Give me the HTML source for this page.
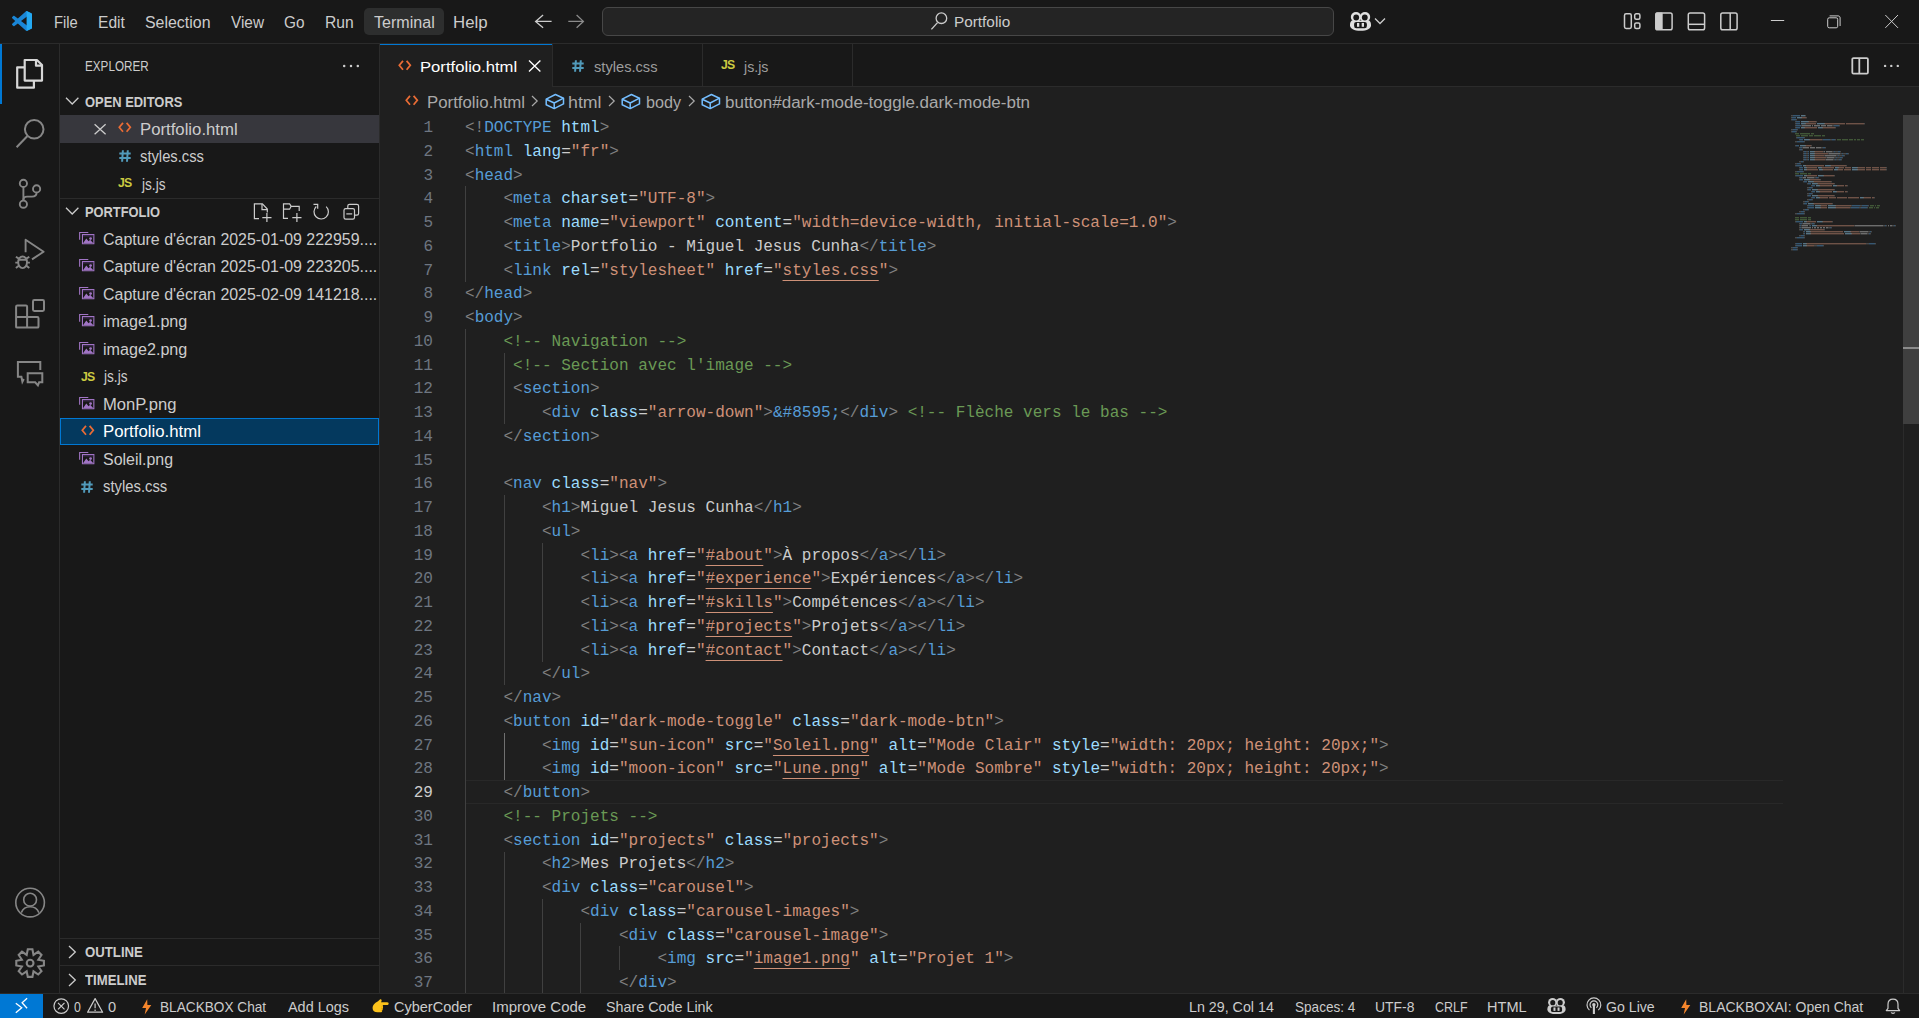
<!DOCTYPE html><html><head><meta charset="utf-8"><title>Portfolio - VS Code</title><style>html,body{margin:0;padding:0;background:#181818;overflow:hidden;width:1919px;height:1018px;position:relative}body>div,body>svg{position:absolute}.ui{font-family:"Liberation Sans",sans-serif;white-space:pre}.code{font-family:"Liberation Mono",monospace;font-size:16.04px;white-space:pre;color:#cccccc}.p{color:#808080}.t{color:#569cd6}.a{color:#9cdcfe}.s{color:#ce9178}.c{color:#6a9955}.x{color:#cccccc}.u{text-decoration:underline;text-underline-offset:4.8px;text-decoration-thickness:1px;text-decoration-skip-ink:none}</style></head><body><div style="left:0px;top:0px;width:1919px;height:43px;background:#181818;"></div><div style="left:0px;top:43px;width:1919px;height:1px;background:#2b2b2b;"></div><div style="left:364px;top:8px;width:80px;height:27px;background:#2d2e2e;border-radius:5px;"></div><div id="m_file" class="ui" style="left:54.03px;top:14.62px;font-size:15.8px;line-height:15.8px;color:#cccccc;font-weight:normal;transform:scaleX(0.9320);transform-origin:0 0;">File</div><div id="m_edit" class="ui" style="left:97.81px;top:14.62px;font-size:15.8px;line-height:15.8px;color:#cccccc;font-weight:normal;transform:scaleX(0.9852);transform-origin:0 0;">Edit</div><div id="m_sel" class="ui" style="left:145.00px;top:14.62px;font-size:15.8px;line-height:15.8px;color:#cccccc;font-weight:normal;transform:scaleX(1.0078);transform-origin:0 0;">Selection</div><div id="m_view" class="ui" style="left:230.79px;top:14.62px;font-size:15.8px;line-height:15.8px;color:#cccccc;font-weight:normal;transform:scaleX(0.9714);transform-origin:0 0;">View</div><div id="m_go" class="ui" style="left:284.21px;top:14.62px;font-size:15.8px;line-height:15.8px;color:#cccccc;font-weight:normal;transform:scaleX(0.9714);transform-origin:0 0;">Go</div><div id="m_run" class="ui" style="left:325.40px;top:14.62px;font-size:15.8px;line-height:15.8px;color:#cccccc;font-weight:normal;transform:scaleX(0.9893);transform-origin:0 0;">Run</div><div id="m_term" class="ui" style="left:374.00px;top:14.62px;font-size:15.8px;line-height:15.8px;color:#cccccc;font-weight:normal;transform:scaleX(1.0169);transform-origin:0 0;">Terminal</div><div id="m_help" class="ui" style="left:452.94px;top:14.62px;font-size:15.8px;line-height:15.8px;color:#cccccc;font-weight:normal;transform:scaleX(1.0645);transform-origin:0 0;">Help</div><div style="left:602px;top:7px;width:732px;height:29px;background:#242424;box-sizing:border-box;border:1px solid #474747;border-radius:6px;"></div><div id="cc_port" class="ui" style="left:953.79px;top:13.93px;font-size:15.2px;line-height:15.2px;color:#cccccc;font-weight:normal;transform:scaleX(1.0091);transform-origin:0 0;">Portfolio</div><div style="left:0px;top:44px;width:59px;height:949px;background:#181818;"></div><div style="left:59px;top:44px;width:1px;height:949px;background:#2b2b2b;"></div><div style="left:0px;top:44px;width:2px;height:60px;background:#0078d4;"></div><div style="left:60px;top:44px;width:319px;height:949px;background:#181818;"></div><div style="left:379px;top:44px;width:1px;height:949px;background:#2b2b2b;"></div><div id="sb_explorer" class="ui" style="left:84.90px;top:59.45px;font-size:14px;line-height:14px;color:#cccccc;font-weight:normal;transform:scaleX(0.8347);transform-origin:0 0;">EXPLORER</div><div id="sb_open" class="ui" style="left:85.00px;top:95.62px;font-size:13.8px;line-height:13.8px;color:#cccccc;font-weight:bold;transform:scaleX(0.9356);transform-origin:0 0;">OPEN EDITORS</div><div style="left:60px;top:115px;width:319px;height:28px;background:#37373d;"></div><div id="oe_port" class="ui" style="left:139.76px;top:121.79px;font-size:15.6px;line-height:15.6px;color:#cccccc;font-weight:normal;transform:scaleX(1.0733);transform-origin:0 0;">Portfolio.html</div><div id="oe_css" class="ui" style="left:139.83px;top:149.29px;font-size:15.6px;line-height:15.6px;color:#cccccc;font-weight:normal;transform:scaleX(0.9463);transform-origin:0 0;">styles.css</div><div id="oe_js" class="ui" style="left:141.62px;top:176.79px;font-size:15.6px;line-height:15.6px;color:#cccccc;font-weight:normal;transform:scaleX(0.8750);transform-origin:0 0;">js.js</div><div style="left:60px;top:198px;width:319px;height:1px;background:#2b2b2b;"></div><div id="sb_portfolio" class="ui" style="left:84.84px;top:206.02px;font-size:13.8px;line-height:13.8px;color:#cccccc;font-weight:bold;transform:scaleX(0.9313);transform-origin:0 0;">PORTFOLIO</div><div style="left:60px;top:418px;width:319px;height:27px;background:#04395e;box-sizing:border-box;border:1px solid #0078d4;"></div><div id="f0" class="ui" style="left:102.60px;top:231.79px;font-size:15.6px;line-height:15.6px;color:#cccccc;font-weight:normal;transform:scaleX(1.0225);transform-origin:0 0;">Capture d'écran 2025-01-09 222959....</div><div id="f1" class="ui" style="left:102.60px;top:259.29px;font-size:15.6px;line-height:15.6px;color:#cccccc;font-weight:normal;transform:scaleX(1.0225);transform-origin:0 0;">Capture d'écran 2025-01-09 223205....</div><div id="f2" class="ui" style="left:102.60px;top:286.79px;font-size:15.6px;line-height:15.6px;color:#cccccc;font-weight:normal;transform:scaleX(1.0225);transform-origin:0 0;">Capture d'écran 2025-02-09 141218....</div><div id="f3" class="ui" style="left:102.59px;top:314.29px;font-size:15.6px;line-height:15.6px;color:#cccccc;font-weight:normal;transform:scaleX(1.0346);transform-origin:0 0;">image1.png</div><div id="f4" class="ui" style="left:102.59px;top:341.79px;font-size:15.6px;line-height:15.6px;color:#cccccc;font-weight:normal;transform:scaleX(1.0346);transform-origin:0 0;">image2.png</div><div id="f5" class="ui" style="left:103.50px;top:369.29px;font-size:15.6px;line-height:15.6px;color:#cccccc;font-weight:normal;transform:scaleX(0.8750);transform-origin:0 0;">js.js</div><div id="f6" class="ui" style="left:102.59px;top:396.79px;font-size:15.6px;line-height:15.6px;color:#cccccc;font-weight:normal;transform:scaleX(1.0652);transform-origin:0 0;">MonP.png</div><div id="f7" class="ui" style="left:102.58px;top:424.29px;font-size:15.6px;line-height:15.6px;color:#ffffff;font-weight:normal;transform:scaleX(1.0756);transform-origin:0 0;">Portfolio.html</div><div id="f8" class="ui" style="left:102.60px;top:451.79px;font-size:15.6px;line-height:15.6px;color:#cccccc;font-weight:normal;transform:scaleX(1.0235);transform-origin:0 0;">Soleil.png</div><div id="f9" class="ui" style="left:102.61px;top:479.29px;font-size:15.6px;line-height:15.6px;color:#cccccc;font-weight:normal;transform:scaleX(0.9507);transform-origin:0 0;">styles.css</div><div style="left:60px;top:938px;width:319px;height:1px;background:#2b2b2b;"></div><div style="left:60px;top:965px;width:319px;height:1px;background:#2b2b2b;"></div><div id="sb_outline" class="ui" style="left:85.00px;top:946.12px;font-size:13.8px;line-height:13.8px;color:#cccccc;font-weight:bold;transform:scaleX(0.9557);transform-origin:0 0;">OUTLINE</div><div id="sb_timeline" class="ui" style="left:85.00px;top:974.22px;font-size:13.8px;line-height:13.8px;color:#cccccc;font-weight:bold;transform:scaleX(0.9538);transform-origin:0 0;">TIMELINE</div><div style="left:380px;top:44px;width:1539px;height:949px;background:#1f1f1f;"></div><div style="left:380px;top:44px;width:1539px;height:43px;background:#181818;"></div><div style="left:380px;top:86px;width:1539px;height:1px;background:#2b2b2b;"></div><div style="left:380px;top:44px;width:172px;height:43px;background:#1f1f1f;"></div><div style="left:380px;top:44px;width:172px;height:1px;background:#0078d4;"></div><div style="left:552px;top:44px;width:1px;height:42px;background:#2b2b2b;"></div><div style="left:702px;top:44px;width:1px;height:42px;background:#2b2b2b;"></div><div style="left:852px;top:44px;width:1px;height:42px;background:#2b2b2b;"></div><div id="tab_port" class="ui" style="left:420.16px;top:59.03px;font-size:15.2px;line-height:15.2px;color:#ffffff;font-weight:normal;transform:scaleX(1.0966);transform-origin:0 0;">Portfolio.html</div><div id="tab_css" class="ui" style="left:593.61px;top:59.03px;font-size:15.2px;line-height:15.2px;color:#9d9d9d;font-weight:normal;transform:scaleX(0.9652);transform-origin:0 0;">styles.css</div><div id="tab_js" class="ui" style="left:743.74px;top:59.03px;font-size:15.2px;line-height:15.2px;color:#9d9d9d;font-weight:normal;transform:scaleX(0.9333);transform-origin:0 0;">js.js</div><div id="bc_port" class="ui" style="left:427.17px;top:94.69px;font-size:15.6px;line-height:15.6px;color:#a9a9a9;font-weight:normal;transform:scaleX(1.0778);transform-origin:0 0;">Portfolio.html</div><div id="bc_html" class="ui" style="left:567.86px;top:94.69px;font-size:15.6px;line-height:15.6px;color:#a9a9a9;font-weight:normal;transform:scaleX(1.1393);transform-origin:0 0;">html</div><div id="bc_body" class="ui" style="left:645.80px;top:94.69px;font-size:15.6px;line-height:15.6px;color:#a9a9a9;font-weight:normal;transform:scaleX(1.0382);transform-origin:0 0;">body</div><div id="bc_btn" class="ui" style="left:725.00px;top:94.69px;font-size:15.6px;line-height:15.6px;color:#a9a9a9;font-weight:normal;transform:scaleX(1.0896);transform-origin:0 0;">button#dark-mode-toggle.dark-mode-btn</div><div style="left:465px;top:780px;width:1318px;height:1px;background:#282828;"></div><div style="left:465px;top:803px;width:1318px;height:1px;background:#282828;"></div><div style="left:465px;top:186px;width:1px;height:96px;background:#404040;"></div><div style="left:465px;top:329px;width:1px;height:665px;background:#404040;"></div><div style="left:504px;top:353px;width:1px;height:71px;background:#404040;"></div><div style="left:504px;top:495px;width:1px;height:190px;background:#404040;"></div><div style="left:542px;top:543px;width:1px;height:119px;background:#404040;"></div><div style="left:504px;top:733px;width:1px;height:47px;background:#707070;"></div><div style="left:504px;top:852px;width:1px;height:142px;background:#404040;"></div><div style="left:542px;top:899px;width:1px;height:95px;background:#404040;"></div><div style="left:580px;top:923px;width:1px;height:71px;background:#404040;"></div><div style="left:619px;top:946px;width:1px;height:24px;background:#404040;"></div><div class="code" style="left:380px;width:53px;text-align:right;top:117.00px;line-height:23.75px;color:#6e7681">1</div><div class="code" style="left:465px;top:117.00px;line-height:23.75px"><span class="p">&lt;!</span><span class="t">DOCTYPE</span><span class="x"> </span><span class="a">html</span><span class="p">&gt;</span></div><div class="code" style="left:380px;width:53px;text-align:right;top:140.75px;line-height:23.75px;color:#6e7681">2</div><div class="code" style="left:465px;top:140.75px;line-height:23.75px"><span class="x"></span><span class="p">&lt;</span><span class="t">html</span><span class="x"> </span><span class="a">lang</span><span class="x">=</span><span class="s">"fr"</span><span class="p">&gt;</span></div><div class="code" style="left:380px;width:53px;text-align:right;top:164.50px;line-height:23.75px;color:#6e7681">3</div><div class="code" style="left:465px;top:164.50px;line-height:23.75px"><span class="x"></span><span class="p">&lt;</span><span class="t">head</span><span class="p">&gt;</span></div><div class="code" style="left:380px;width:53px;text-align:right;top:188.25px;line-height:23.75px;color:#6e7681">4</div><div class="code" style="left:465px;top:188.25px;line-height:23.75px"><span class="x">    </span><span class="p">&lt;</span><span class="t">meta</span><span class="x"> </span><span class="a">charset</span><span class="x">=</span><span class="s">"UTF-8"</span><span class="p">&gt;</span></div><div class="code" style="left:380px;width:53px;text-align:right;top:212.00px;line-height:23.75px;color:#6e7681">5</div><div class="code" style="left:465px;top:212.00px;line-height:23.75px"><span class="x">    </span><span class="p">&lt;</span><span class="t">meta</span><span class="x"> </span><span class="a">name</span><span class="x">=</span><span class="s">"viewport"</span><span class="x"> </span><span class="a">content</span><span class="x">=</span><span class="s">"width=device-width, initial-scale=1.0"</span><span class="p">&gt;</span></div><div class="code" style="left:380px;width:53px;text-align:right;top:235.75px;line-height:23.75px;color:#6e7681">6</div><div class="code" style="left:465px;top:235.75px;line-height:23.75px"><span class="x">    </span><span class="p">&lt;</span><span class="t">title</span><span class="p">&gt;</span><span class="x">Portfolio - Miguel Jesus Cunha</span><span class="x"></span><span class="p">&lt;/</span><span class="t">title</span><span class="p">&gt;</span></div><div class="code" style="left:380px;width:53px;text-align:right;top:259.50px;line-height:23.75px;color:#6e7681">7</div><div class="code" style="left:465px;top:259.50px;line-height:23.75px"><span class="x">    </span><span class="p">&lt;</span><span class="t">link</span><span class="x"> </span><span class="a">rel</span><span class="x">=</span><span class="s">"stylesheet"</span><span class="x"> </span><span class="a">href</span><span class="x">=</span><span class="s">"</span><span class="s u">styles.css</span><span class="s">"</span><span class="p">&gt;</span></div><div class="code" style="left:380px;width:53px;text-align:right;top:283.25px;line-height:23.75px;color:#6e7681">8</div><div class="code" style="left:465px;top:283.25px;line-height:23.75px"><span class="x"></span><span class="p">&lt;/</span><span class="t">head</span><span class="p">&gt;</span></div><div class="code" style="left:380px;width:53px;text-align:right;top:307.00px;line-height:23.75px;color:#6e7681">9</div><div class="code" style="left:465px;top:307.00px;line-height:23.75px"><span class="x"></span><span class="p">&lt;</span><span class="t">body</span><span class="p">&gt;</span></div><div class="code" style="left:380px;width:53px;text-align:right;top:330.75px;line-height:23.75px;color:#6e7681">10</div><div class="code" style="left:465px;top:330.75px;line-height:23.75px"><span class="x">    </span><span class="c">&lt;!-- Navigation --&gt;</span></div><div class="code" style="left:380px;width:53px;text-align:right;top:354.50px;line-height:23.75px;color:#6e7681">11</div><div class="code" style="left:465px;top:354.50px;line-height:23.75px"><span class="x">     </span><span class="c">&lt;!-- Section avec l'image --&gt;</span></div><div class="code" style="left:380px;width:53px;text-align:right;top:378.25px;line-height:23.75px;color:#6e7681">12</div><div class="code" style="left:465px;top:378.25px;line-height:23.75px"><span class="x">     </span><span class="p">&lt;</span><span class="t">section</span><span class="p">&gt;</span></div><div class="code" style="left:380px;width:53px;text-align:right;top:402.00px;line-height:23.75px;color:#6e7681">13</div><div class="code" style="left:465px;top:402.00px;line-height:23.75px"><span class="x">        </span><span class="p">&lt;</span><span class="t">div</span><span class="x"> </span><span class="a">class</span><span class="x">=</span><span class="s">"arrow-down"</span><span class="p">&gt;</span><span class="t">&amp;#8595;</span><span class="x"></span><span class="p">&lt;/</span><span class="t">div</span><span class="p">&gt;</span><span class="x"> </span><span class="c">&lt;!-- Flèche vers le bas --&gt;</span></div><div class="code" style="left:380px;width:53px;text-align:right;top:425.75px;line-height:23.75px;color:#6e7681">14</div><div class="code" style="left:465px;top:425.75px;line-height:23.75px"><span class="x">    </span><span class="p">&lt;/</span><span class="t">section</span><span class="p">&gt;</span></div><div class="code" style="left:380px;width:53px;text-align:right;top:449.50px;line-height:23.75px;color:#6e7681">15</div><div class="code" style="left:465px;top:449.50px;line-height:23.75px"></div><div class="code" style="left:380px;width:53px;text-align:right;top:473.25px;line-height:23.75px;color:#6e7681">16</div><div class="code" style="left:465px;top:473.25px;line-height:23.75px"><span class="x">    </span><span class="p">&lt;</span><span class="t">nav</span><span class="x"> </span><span class="a">class</span><span class="x">=</span><span class="s">"nav"</span><span class="p">&gt;</span></div><div class="code" style="left:380px;width:53px;text-align:right;top:497.00px;line-height:23.75px;color:#6e7681">17</div><div class="code" style="left:465px;top:497.00px;line-height:23.75px"><span class="x">        </span><span class="p">&lt;</span><span class="t">h1</span><span class="p">&gt;</span><span class="x">Miguel Jesus Cunha</span><span class="x"></span><span class="p">&lt;/</span><span class="t">h1</span><span class="p">&gt;</span></div><div class="code" style="left:380px;width:53px;text-align:right;top:520.75px;line-height:23.75px;color:#6e7681">18</div><div class="code" style="left:465px;top:520.75px;line-height:23.75px"><span class="x">        </span><span class="p">&lt;</span><span class="t">ul</span><span class="p">&gt;</span></div><div class="code" style="left:380px;width:53px;text-align:right;top:544.50px;line-height:23.75px;color:#6e7681">19</div><div class="code" style="left:465px;top:544.50px;line-height:23.75px"><span class="x">            </span><span class="p">&lt;</span><span class="t">li</span><span class="p">&gt;</span><span class="x"></span><span class="p">&lt;</span><span class="t">a</span><span class="x"> </span><span class="a">href</span><span class="x">=</span><span class="s">"</span><span class="s u">#about</span><span class="s">"</span><span class="p">&gt;</span><span class="x">À propos</span><span class="x"></span><span class="p">&lt;/</span><span class="t">a</span><span class="p">&gt;</span><span class="x"></span><span class="p">&lt;/</span><span class="t">li</span><span class="p">&gt;</span></div><div class="code" style="left:380px;width:53px;text-align:right;top:568.25px;line-height:23.75px;color:#6e7681">20</div><div class="code" style="left:465px;top:568.25px;line-height:23.75px"><span class="x">            </span><span class="p">&lt;</span><span class="t">li</span><span class="p">&gt;</span><span class="x"></span><span class="p">&lt;</span><span class="t">a</span><span class="x"> </span><span class="a">href</span><span class="x">=</span><span class="s">"</span><span class="s u">#experience</span><span class="s">"</span><span class="p">&gt;</span><span class="x">Expériences</span><span class="x"></span><span class="p">&lt;/</span><span class="t">a</span><span class="p">&gt;</span><span class="x"></span><span class="p">&lt;/</span><span class="t">li</span><span class="p">&gt;</span></div><div class="code" style="left:380px;width:53px;text-align:right;top:592.00px;line-height:23.75px;color:#6e7681">21</div><div class="code" style="left:465px;top:592.00px;line-height:23.75px"><span class="x">            </span><span class="p">&lt;</span><span class="t">li</span><span class="p">&gt;</span><span class="x"></span><span class="p">&lt;</span><span class="t">a</span><span class="x"> </span><span class="a">href</span><span class="x">=</span><span class="s">"</span><span class="s u">#skills</span><span class="s">"</span><span class="p">&gt;</span><span class="x">Compétences</span><span class="x"></span><span class="p">&lt;/</span><span class="t">a</span><span class="p">&gt;</span><span class="x"></span><span class="p">&lt;/</span><span class="t">li</span><span class="p">&gt;</span></div><div class="code" style="left:380px;width:53px;text-align:right;top:615.75px;line-height:23.75px;color:#6e7681">22</div><div class="code" style="left:465px;top:615.75px;line-height:23.75px"><span class="x">            </span><span class="p">&lt;</span><span class="t">li</span><span class="p">&gt;</span><span class="x"></span><span class="p">&lt;</span><span class="t">a</span><span class="x"> </span><span class="a">href</span><span class="x">=</span><span class="s">"</span><span class="s u">#projects</span><span class="s">"</span><span class="p">&gt;</span><span class="x">Projets</span><span class="x"></span><span class="p">&lt;/</span><span class="t">a</span><span class="p">&gt;</span><span class="x"></span><span class="p">&lt;/</span><span class="t">li</span><span class="p">&gt;</span></div><div class="code" style="left:380px;width:53px;text-align:right;top:639.50px;line-height:23.75px;color:#6e7681">23</div><div class="code" style="left:465px;top:639.50px;line-height:23.75px"><span class="x">            </span><span class="p">&lt;</span><span class="t">li</span><span class="p">&gt;</span><span class="x"></span><span class="p">&lt;</span><span class="t">a</span><span class="x"> </span><span class="a">href</span><span class="x">=</span><span class="s">"</span><span class="s u">#contact</span><span class="s">"</span><span class="p">&gt;</span><span class="x">Contact</span><span class="x"></span><span class="p">&lt;/</span><span class="t">a</span><span class="p">&gt;</span><span class="x"></span><span class="p">&lt;/</span><span class="t">li</span><span class="p">&gt;</span></div><div class="code" style="left:380px;width:53px;text-align:right;top:663.25px;line-height:23.75px;color:#6e7681">24</div><div class="code" style="left:465px;top:663.25px;line-height:23.75px"><span class="x">        </span><span class="p">&lt;/</span><span class="t">ul</span><span class="p">&gt;</span></div><div class="code" style="left:380px;width:53px;text-align:right;top:687.00px;line-height:23.75px;color:#6e7681">25</div><div class="code" style="left:465px;top:687.00px;line-height:23.75px"><span class="x">    </span><span class="p">&lt;/</span><span class="t">nav</span><span class="p">&gt;</span></div><div class="code" style="left:380px;width:53px;text-align:right;top:710.75px;line-height:23.75px;color:#6e7681">26</div><div class="code" style="left:465px;top:710.75px;line-height:23.75px"><span class="x">    </span><span class="p">&lt;</span><span class="t">button</span><span class="x"> </span><span class="a">id</span><span class="x">=</span><span class="s">"dark-mode-toggle"</span><span class="x"> </span><span class="a">class</span><span class="x">=</span><span class="s">"dark-mode-btn"</span><span class="p">&gt;</span></div><div class="code" style="left:380px;width:53px;text-align:right;top:734.50px;line-height:23.75px;color:#6e7681">27</div><div class="code" style="left:465px;top:734.50px;line-height:23.75px"><span class="x">        </span><span class="p">&lt;</span><span class="t">img</span><span class="x"> </span><span class="a">id</span><span class="x">=</span><span class="s">"sun-icon"</span><span class="x"> </span><span class="a">src</span><span class="x">=</span><span class="s">"</span><span class="s u">Soleil.png</span><span class="s">"</span><span class="x"> </span><span class="a">alt</span><span class="x">=</span><span class="s">"Mode Clair"</span><span class="x"> </span><span class="a">style</span><span class="x">=</span><span class="s">"width: 20px; height: 20px;"</span><span class="p">&gt;</span></div><div class="code" style="left:380px;width:53px;text-align:right;top:758.25px;line-height:23.75px;color:#6e7681">28</div><div class="code" style="left:465px;top:758.25px;line-height:23.75px"><span class="x">        </span><span class="p">&lt;</span><span class="t">img</span><span class="x"> </span><span class="a">id</span><span class="x">=</span><span class="s">"moon-icon"</span><span class="x"> </span><span class="a">src</span><span class="x">=</span><span class="s">"</span><span class="s u">Lune.png</span><span class="s">"</span><span class="x"> </span><span class="a">alt</span><span class="x">=</span><span class="s">"Mode Sombre"</span><span class="x"> </span><span class="a">style</span><span class="x">=</span><span class="s">"width: 20px; height: 20px;"</span><span class="p">&gt;</span></div><div class="code" style="left:380px;width:53px;text-align:right;top:782.00px;line-height:23.75px;color:#cccccc">29</div><div class="code" style="left:465px;top:782.00px;line-height:23.75px"><span class="x">    </span><span class="p">&lt;/</span><span class="t">button</span><span class="p">&gt;</span></div><div class="code" style="left:380px;width:53px;text-align:right;top:805.75px;line-height:23.75px;color:#6e7681">30</div><div class="code" style="left:465px;top:805.75px;line-height:23.75px"><span class="x">    </span><span class="c">&lt;!-- Projets --&gt;</span></div><div class="code" style="left:380px;width:53px;text-align:right;top:829.50px;line-height:23.75px;color:#6e7681">31</div><div class="code" style="left:465px;top:829.50px;line-height:23.75px"><span class="x">    </span><span class="p">&lt;</span><span class="t">section</span><span class="x"> </span><span class="a">id</span><span class="x">=</span><span class="s">"projects"</span><span class="x"> </span><span class="a">class</span><span class="x">=</span><span class="s">"projects"</span><span class="p">&gt;</span></div><div class="code" style="left:380px;width:53px;text-align:right;top:853.25px;line-height:23.75px;color:#6e7681">32</div><div class="code" style="left:465px;top:853.25px;line-height:23.75px"><span class="x">        </span><span class="p">&lt;</span><span class="t">h2</span><span class="p">&gt;</span><span class="x">Mes Projets</span><span class="x"></span><span class="p">&lt;/</span><span class="t">h2</span><span class="p">&gt;</span></div><div class="code" style="left:380px;width:53px;text-align:right;top:877.00px;line-height:23.75px;color:#6e7681">33</div><div class="code" style="left:465px;top:877.00px;line-height:23.75px"><span class="x">        </span><span class="p">&lt;</span><span class="t">div</span><span class="x"> </span><span class="a">class</span><span class="x">=</span><span class="s">"carousel"</span><span class="p">&gt;</span></div><div class="code" style="left:380px;width:53px;text-align:right;top:900.75px;line-height:23.75px;color:#6e7681">34</div><div class="code" style="left:465px;top:900.75px;line-height:23.75px"><span class="x">            </span><span class="p">&lt;</span><span class="t">div</span><span class="x"> </span><span class="a">class</span><span class="x">=</span><span class="s">"carousel-images"</span><span class="p">&gt;</span></div><div class="code" style="left:380px;width:53px;text-align:right;top:924.50px;line-height:23.75px;color:#6e7681">35</div><div class="code" style="left:465px;top:924.50px;line-height:23.75px"><span class="x">                </span><span class="p">&lt;</span><span class="t">div</span><span class="x"> </span><span class="a">class</span><span class="x">=</span><span class="s">"carousel-image"</span><span class="p">&gt;</span></div><div class="code" style="left:380px;width:53px;text-align:right;top:948.25px;line-height:23.75px;color:#6e7681">36</div><div class="code" style="left:465px;top:948.25px;line-height:23.75px"><span class="x">                    </span><span class="p">&lt;</span><span class="t">img</span><span class="x"> </span><span class="a">src</span><span class="x">=</span><span class="s">"</span><span class="s u">image1.png</span><span class="s">"</span><span class="x"> </span><span class="a">alt</span><span class="x">=</span><span class="s">"Projet 1"</span><span class="p">&gt;</span></div><div class="code" style="left:380px;width:53px;text-align:right;top:972.00px;line-height:23.75px;color:#6e7681">37</div><div class="code" style="left:465px;top:972.00px;line-height:23.75px"><span class="x">                </span><span class="p">&lt;/</span><span class="t">div</span><span class="p">&gt;</span></div><svg style="left:1791px;top:115px;opacity:0.45" width="110" height="136" viewBox="0 0 110 136"><rect x="0" y="0" width="2" height="1.4" fill="#808080"/><rect x="2" y="0" width="7" height="1.4" fill="#569cd6"/><rect x="10" y="0" width="4" height="1.4" fill="#9cdcfe"/><rect x="14" y="0" width="1" height="1.4" fill="#808080"/><rect x="0" y="2" width="1" height="1.4" fill="#808080"/><rect x="1" y="2" width="4" height="1.4" fill="#569cd6"/><rect x="6" y="2" width="4" height="1.4" fill="#9cdcfe"/><rect x="10" y="2" width="1" height="1.4" fill="#cccccc"/><rect x="11" y="2" width="4" height="1.4" fill="#ce9178"/><rect x="15" y="2" width="1" height="1.4" fill="#808080"/><rect x="0" y="4" width="1" height="1.4" fill="#808080"/><rect x="1" y="4" width="4" height="1.4" fill="#569cd6"/><rect x="5" y="4" width="1" height="1.4" fill="#808080"/><rect x="4" y="6" width="1" height="1.4" fill="#808080"/><rect x="5" y="6" width="4" height="1.4" fill="#569cd6"/><rect x="10" y="6" width="7" height="1.4" fill="#9cdcfe"/><rect x="17" y="6" width="1" height="1.4" fill="#cccccc"/><rect x="18" y="6" width="7" height="1.4" fill="#ce9178"/><rect x="25" y="6" width="1" height="1.4" fill="#808080"/><rect x="4" y="8" width="1" height="1.4" fill="#808080"/><rect x="5" y="8" width="4" height="1.4" fill="#569cd6"/><rect x="10" y="8" width="4" height="1.4" fill="#9cdcfe"/><rect x="14" y="8" width="1" height="1.4" fill="#cccccc"/><rect x="15" y="8" width="10" height="1.4" fill="#ce9178"/><rect x="26" y="8" width="7" height="1.4" fill="#9cdcfe"/><rect x="33" y="8" width="1" height="1.4" fill="#cccccc"/><rect x="34" y="8" width="20" height="1.4" fill="#ce9178"/><rect x="55" y="8" width="18" height="1.4" fill="#ce9178"/><rect x="73" y="8" width="1" height="1.4" fill="#808080"/><rect x="4" y="10" width="1" height="1.4" fill="#808080"/><rect x="5" y="10" width="5" height="1.4" fill="#569cd6"/><rect x="10" y="10" width="1" height="1.4" fill="#808080"/><rect x="11" y="10" width="9" height="1.4" fill="#cccccc"/><rect x="21" y="10" width="1" height="1.4" fill="#cccccc"/><rect x="23" y="10" width="6" height="1.4" fill="#cccccc"/><rect x="30" y="10" width="5" height="1.4" fill="#cccccc"/><rect x="36" y="10" width="5" height="1.4" fill="#cccccc"/><rect x="41" y="10" width="2" height="1.4" fill="#808080"/><rect x="43" y="10" width="5" height="1.4" fill="#569cd6"/><rect x="48" y="10" width="1" height="1.4" fill="#808080"/><rect x="4" y="12" width="1" height="1.4" fill="#808080"/><rect x="5" y="12" width="4" height="1.4" fill="#569cd6"/><rect x="10" y="12" width="3" height="1.4" fill="#9cdcfe"/><rect x="13" y="12" width="1" height="1.4" fill="#cccccc"/><rect x="14" y="12" width="12" height="1.4" fill="#ce9178"/><rect x="27" y="12" width="4" height="1.4" fill="#9cdcfe"/><rect x="31" y="12" width="1" height="1.4" fill="#cccccc"/><rect x="32" y="12" width="12" height="1.4" fill="#ce9178"/><rect x="44" y="12" width="1" height="1.4" fill="#808080"/><rect x="0" y="14" width="2" height="1.4" fill="#808080"/><rect x="2" y="14" width="4" height="1.4" fill="#569cd6"/><rect x="6" y="14" width="1" height="1.4" fill="#808080"/><rect x="0" y="16" width="1" height="1.4" fill="#808080"/><rect x="1" y="16" width="4" height="1.4" fill="#569cd6"/><rect x="5" y="16" width="1" height="1.4" fill="#808080"/><rect x="4" y="18" width="4" height="1.4" fill="#6a9955"/><rect x="9" y="18" width="10" height="1.4" fill="#6a9955"/><rect x="20" y="18" width="3" height="1.4" fill="#6a9955"/><rect x="5" y="20" width="4" height="1.4" fill="#6a9955"/><rect x="10" y="20" width="7" height="1.4" fill="#6a9955"/><rect x="18" y="20" width="4" height="1.4" fill="#6a9955"/><rect x="23" y="20" width="7" height="1.4" fill="#6a9955"/><rect x="31" y="20" width="3" height="1.4" fill="#6a9955"/><rect x="5" y="22" width="1" height="1.4" fill="#808080"/><rect x="6" y="22" width="7" height="1.4" fill="#569cd6"/><rect x="13" y="22" width="1" height="1.4" fill="#808080"/><rect x="8" y="24" width="1" height="1.4" fill="#808080"/><rect x="9" y="24" width="3" height="1.4" fill="#569cd6"/><rect x="13" y="24" width="5" height="1.4" fill="#9cdcfe"/><rect x="18" y="24" width="1" height="1.4" fill="#cccccc"/><rect x="19" y="24" width="12" height="1.4" fill="#ce9178"/><rect x="31" y="24" width="1" height="1.4" fill="#808080"/><rect x="32" y="24" width="7" height="1.4" fill="#569cd6"/><rect x="39" y="24" width="2" height="1.4" fill="#808080"/><rect x="41" y="24" width="3" height="1.4" fill="#569cd6"/><rect x="44" y="24" width="1" height="1.4" fill="#808080"/><rect x="46" y="24" width="4" height="1.4" fill="#6a9955"/><rect x="51" y="24" width="6" height="1.4" fill="#6a9955"/><rect x="58" y="24" width="4" height="1.4" fill="#6a9955"/><rect x="63" y="24" width="2" height="1.4" fill="#6a9955"/><rect x="66" y="24" width="3" height="1.4" fill="#6a9955"/><rect x="70" y="24" width="3" height="1.4" fill="#6a9955"/><rect x="4" y="26" width="2" height="1.4" fill="#808080"/><rect x="6" y="26" width="7" height="1.4" fill="#569cd6"/><rect x="13" y="26" width="1" height="1.4" fill="#808080"/><rect x="4" y="30" width="1" height="1.4" fill="#808080"/><rect x="5" y="30" width="3" height="1.4" fill="#569cd6"/><rect x="9" y="30" width="5" height="1.4" fill="#9cdcfe"/><rect x="14" y="30" width="1" height="1.4" fill="#cccccc"/><rect x="15" y="30" width="5" height="1.4" fill="#ce9178"/><rect x="20" y="30" width="1" height="1.4" fill="#808080"/><rect x="8" y="32" width="1" height="1.4" fill="#808080"/><rect x="9" y="32" width="2" height="1.4" fill="#569cd6"/><rect x="11" y="32" width="1" height="1.4" fill="#808080"/><rect x="12" y="32" width="6" height="1.4" fill="#cccccc"/><rect x="19" y="32" width="5" height="1.4" fill="#cccccc"/><rect x="25" y="32" width="5" height="1.4" fill="#cccccc"/><rect x="30" y="32" width="2" height="1.4" fill="#808080"/><rect x="32" y="32" width="2" height="1.4" fill="#569cd6"/><rect x="34" y="32" width="1" height="1.4" fill="#808080"/><rect x="8" y="34" width="1" height="1.4" fill="#808080"/><rect x="9" y="34" width="2" height="1.4" fill="#569cd6"/><rect x="11" y="34" width="1" height="1.4" fill="#808080"/><rect x="12" y="36" width="1" height="1.4" fill="#808080"/><rect x="13" y="36" width="2" height="1.4" fill="#569cd6"/><rect x="15" y="36" width="2" height="1.4" fill="#808080"/><rect x="17" y="36" width="1" height="1.4" fill="#569cd6"/><rect x="19" y="36" width="4" height="1.4" fill="#9cdcfe"/><rect x="23" y="36" width="1" height="1.4" fill="#cccccc"/><rect x="24" y="36" width="8" height="1.4" fill="#ce9178"/><rect x="32" y="36" width="1" height="1.4" fill="#808080"/><rect x="33" y="36" width="1" height="1.4" fill="#cccccc"/><rect x="35" y="36" width="6" height="1.4" fill="#cccccc"/><rect x="41" y="36" width="2" height="1.4" fill="#808080"/><rect x="43" y="36" width="1" height="1.4" fill="#569cd6"/><rect x="44" y="36" width="3" height="1.4" fill="#808080"/><rect x="47" y="36" width="2" height="1.4" fill="#569cd6"/><rect x="49" y="36" width="1" height="1.4" fill="#808080"/><rect x="12" y="38" width="1" height="1.4" fill="#808080"/><rect x="13" y="38" width="2" height="1.4" fill="#569cd6"/><rect x="15" y="38" width="2" height="1.4" fill="#808080"/><rect x="17" y="38" width="1" height="1.4" fill="#569cd6"/><rect x="19" y="38" width="4" height="1.4" fill="#9cdcfe"/><rect x="23" y="38" width="1" height="1.4" fill="#cccccc"/><rect x="24" y="38" width="13" height="1.4" fill="#ce9178"/><rect x="37" y="38" width="1" height="1.4" fill="#808080"/><rect x="38" y="38" width="11" height="1.4" fill="#cccccc"/><rect x="49" y="38" width="2" height="1.4" fill="#808080"/><rect x="51" y="38" width="1" height="1.4" fill="#569cd6"/><rect x="52" y="38" width="3" height="1.4" fill="#808080"/><rect x="55" y="38" width="2" height="1.4" fill="#569cd6"/><rect x="57" y="38" width="1" height="1.4" fill="#808080"/><rect x="12" y="40" width="1" height="1.4" fill="#808080"/><rect x="13" y="40" width="2" height="1.4" fill="#569cd6"/><rect x="15" y="40" width="2" height="1.4" fill="#808080"/><rect x="17" y="40" width="1" height="1.4" fill="#569cd6"/><rect x="19" y="40" width="4" height="1.4" fill="#9cdcfe"/><rect x="23" y="40" width="1" height="1.4" fill="#cccccc"/><rect x="24" y="40" width="9" height="1.4" fill="#ce9178"/><rect x="33" y="40" width="1" height="1.4" fill="#808080"/><rect x="34" y="40" width="11" height="1.4" fill="#cccccc"/><rect x="45" y="40" width="2" height="1.4" fill="#808080"/><rect x="47" y="40" width="1" height="1.4" fill="#569cd6"/><rect x="48" y="40" width="3" height="1.4" fill="#808080"/><rect x="51" y="40" width="2" height="1.4" fill="#569cd6"/><rect x="53" y="40" width="1" height="1.4" fill="#808080"/><rect x="12" y="42" width="1" height="1.4" fill="#808080"/><rect x="13" y="42" width="2" height="1.4" fill="#569cd6"/><rect x="15" y="42" width="2" height="1.4" fill="#808080"/><rect x="17" y="42" width="1" height="1.4" fill="#569cd6"/><rect x="19" y="42" width="4" height="1.4" fill="#9cdcfe"/><rect x="23" y="42" width="1" height="1.4" fill="#cccccc"/><rect x="24" y="42" width="11" height="1.4" fill="#ce9178"/><rect x="35" y="42" width="1" height="1.4" fill="#808080"/><rect x="36" y="42" width="7" height="1.4" fill="#cccccc"/><rect x="43" y="42" width="2" height="1.4" fill="#808080"/><rect x="45" y="42" width="1" height="1.4" fill="#569cd6"/><rect x="46" y="42" width="3" height="1.4" fill="#808080"/><rect x="49" y="42" width="2" height="1.4" fill="#569cd6"/><rect x="51" y="42" width="1" height="1.4" fill="#808080"/><rect x="12" y="44" width="1" height="1.4" fill="#808080"/><rect x="13" y="44" width="2" height="1.4" fill="#569cd6"/><rect x="15" y="44" width="2" height="1.4" fill="#808080"/><rect x="17" y="44" width="1" height="1.4" fill="#569cd6"/><rect x="19" y="44" width="4" height="1.4" fill="#9cdcfe"/><rect x="23" y="44" width="1" height="1.4" fill="#cccccc"/><rect x="24" y="44" width="10" height="1.4" fill="#ce9178"/><rect x="34" y="44" width="1" height="1.4" fill="#808080"/><rect x="35" y="44" width="7" height="1.4" fill="#cccccc"/><rect x="42" y="44" width="2" height="1.4" fill="#808080"/><rect x="44" y="44" width="1" height="1.4" fill="#569cd6"/><rect x="45" y="44" width="3" height="1.4" fill="#808080"/><rect x="48" y="44" width="2" height="1.4" fill="#569cd6"/><rect x="50" y="44" width="1" height="1.4" fill="#808080"/><rect x="8" y="46" width="2" height="1.4" fill="#808080"/><rect x="10" y="46" width="2" height="1.4" fill="#569cd6"/><rect x="12" y="46" width="1" height="1.4" fill="#808080"/><rect x="4" y="48" width="2" height="1.4" fill="#808080"/><rect x="6" y="48" width="3" height="1.4" fill="#569cd6"/><rect x="9" y="48" width="1" height="1.4" fill="#808080"/><rect x="4" y="50" width="1" height="1.4" fill="#808080"/><rect x="5" y="50" width="6" height="1.4" fill="#569cd6"/><rect x="12" y="50" width="2" height="1.4" fill="#9cdcfe"/><rect x="14" y="50" width="1" height="1.4" fill="#cccccc"/><rect x="15" y="50" width="18" height="1.4" fill="#ce9178"/><rect x="34" y="50" width="5" height="1.4" fill="#9cdcfe"/><rect x="39" y="50" width="1" height="1.4" fill="#cccccc"/><rect x="40" y="50" width="15" height="1.4" fill="#ce9178"/><rect x="55" y="50" width="1" height="1.4" fill="#808080"/><rect x="8" y="52" width="1" height="1.4" fill="#808080"/><rect x="9" y="52" width="3" height="1.4" fill="#569cd6"/><rect x="13" y="52" width="2" height="1.4" fill="#9cdcfe"/><rect x="15" y="52" width="1" height="1.4" fill="#cccccc"/><rect x="16" y="52" width="10" height="1.4" fill="#ce9178"/><rect x="27" y="52" width="3" height="1.4" fill="#9cdcfe"/><rect x="30" y="52" width="1" height="1.4" fill="#cccccc"/><rect x="31" y="52" width="12" height="1.4" fill="#ce9178"/><rect x="44" y="52" width="3" height="1.4" fill="#9cdcfe"/><rect x="47" y="52" width="1" height="1.4" fill="#cccccc"/><rect x="48" y="52" width="5" height="1.4" fill="#ce9178"/><rect x="54" y="52" width="6" height="1.4" fill="#ce9178"/><rect x="61" y="52" width="5" height="1.4" fill="#9cdcfe"/><rect x="66" y="52" width="1" height="1.4" fill="#cccccc"/><rect x="67" y="52" width="7" height="1.4" fill="#ce9178"/><rect x="75" y="52" width="5" height="1.4" fill="#ce9178"/><rect x="81" y="52" width="7" height="1.4" fill="#ce9178"/><rect x="89" y="52" width="6" height="1.4" fill="#ce9178"/><rect x="95" y="52" width="1" height="1.4" fill="#808080"/><rect x="8" y="54" width="1" height="1.4" fill="#808080"/><rect x="9" y="54" width="3" height="1.4" fill="#569cd6"/><rect x="13" y="54" width="2" height="1.4" fill="#9cdcfe"/><rect x="15" y="54" width="1" height="1.4" fill="#cccccc"/><rect x="16" y="54" width="11" height="1.4" fill="#ce9178"/><rect x="28" y="54" width="3" height="1.4" fill="#9cdcfe"/><rect x="31" y="54" width="1" height="1.4" fill="#cccccc"/><rect x="32" y="54" width="10" height="1.4" fill="#ce9178"/><rect x="43" y="54" width="3" height="1.4" fill="#9cdcfe"/><rect x="46" y="54" width="1" height="1.4" fill="#cccccc"/><rect x="47" y="54" width="5" height="1.4" fill="#ce9178"/><rect x="53" y="54" width="7" height="1.4" fill="#ce9178"/><rect x="61" y="54" width="5" height="1.4" fill="#9cdcfe"/><rect x="66" y="54" width="1" height="1.4" fill="#cccccc"/><rect x="67" y="54" width="7" height="1.4" fill="#ce9178"/><rect x="75" y="54" width="5" height="1.4" fill="#ce9178"/><rect x="81" y="54" width="7" height="1.4" fill="#ce9178"/><rect x="89" y="54" width="6" height="1.4" fill="#ce9178"/><rect x="95" y="54" width="1" height="1.4" fill="#808080"/><rect x="4" y="56" width="2" height="1.4" fill="#808080"/><rect x="6" y="56" width="6" height="1.4" fill="#569cd6"/><rect x="12" y="56" width="1" height="1.4" fill="#808080"/><rect x="4" y="58" width="4" height="1.4" fill="#6a9955"/><rect x="9" y="58" width="7" height="1.4" fill="#6a9955"/><rect x="17" y="58" width="3" height="1.4" fill="#6a9955"/><rect x="4" y="60" width="1" height="1.4" fill="#808080"/><rect x="5" y="60" width="7" height="1.4" fill="#569cd6"/><rect x="13" y="60" width="2" height="1.4" fill="#9cdcfe"/><rect x="15" y="60" width="1" height="1.4" fill="#cccccc"/><rect x="16" y="60" width="10" height="1.4" fill="#ce9178"/><rect x="27" y="60" width="5" height="1.4" fill="#9cdcfe"/><rect x="32" y="60" width="1" height="1.4" fill="#cccccc"/><rect x="33" y="60" width="10" height="1.4" fill="#ce9178"/><rect x="43" y="60" width="1" height="1.4" fill="#808080"/><rect x="8" y="62" width="1" height="1.4" fill="#808080"/><rect x="9" y="62" width="2" height="1.4" fill="#569cd6"/><rect x="11" y="62" width="1" height="1.4" fill="#808080"/><rect x="12" y="62" width="3" height="1.4" fill="#cccccc"/><rect x="16" y="62" width="7" height="1.4" fill="#cccccc"/><rect x="23" y="62" width="2" height="1.4" fill="#808080"/><rect x="25" y="62" width="2" height="1.4" fill="#569cd6"/><rect x="27" y="62" width="1" height="1.4" fill="#808080"/><rect x="8" y="64" width="1" height="1.4" fill="#808080"/><rect x="9" y="64" width="3" height="1.4" fill="#569cd6"/><rect x="13" y="64" width="5" height="1.4" fill="#9cdcfe"/><rect x="18" y="64" width="1" height="1.4" fill="#cccccc"/><rect x="19" y="64" width="10" height="1.4" fill="#ce9178"/><rect x="29" y="64" width="1" height="1.4" fill="#808080"/><rect x="12" y="66" width="1" height="1.4" fill="#808080"/><rect x="13" y="66" width="3" height="1.4" fill="#569cd6"/><rect x="17" y="66" width="5" height="1.4" fill="#9cdcfe"/><rect x="22" y="66" width="1" height="1.4" fill="#cccccc"/><rect x="23" y="66" width="17" height="1.4" fill="#ce9178"/><rect x="40" y="66" width="1" height="1.4" fill="#808080"/><rect x="16" y="68" width="1" height="1.4" fill="#808080"/><rect x="17" y="68" width="3" height="1.4" fill="#569cd6"/><rect x="21" y="68" width="5" height="1.4" fill="#9cdcfe"/><rect x="26" y="68" width="1" height="1.4" fill="#cccccc"/><rect x="27" y="68" width="16" height="1.4" fill="#ce9178"/><rect x="43" y="68" width="1" height="1.4" fill="#808080"/><rect x="20" y="70" width="1" height="1.4" fill="#808080"/><rect x="21" y="70" width="3" height="1.4" fill="#569cd6"/><rect x="25" y="70" width="3" height="1.4" fill="#9cdcfe"/><rect x="28" y="70" width="1" height="1.4" fill="#cccccc"/><rect x="29" y="70" width="12" height="1.4" fill="#ce9178"/><rect x="42" y="70" width="3" height="1.4" fill="#9cdcfe"/><rect x="45" y="70" width="1" height="1.4" fill="#cccccc"/><rect x="46" y="70" width="7" height="1.4" fill="#ce9178"/><rect x="54" y="70" width="2" height="1.4" fill="#ce9178"/><rect x="56" y="70" width="1" height="1.4" fill="#808080"/><rect x="16" y="72" width="2" height="1.4" fill="#808080"/><rect x="18" y="72" width="3" height="1.4" fill="#569cd6"/><rect x="21" y="72" width="1" height="1.4" fill="#808080"/><rect x="16" y="74" width="1" height="1.4" fill="#808080"/><rect x="17" y="74" width="3" height="1.4" fill="#569cd6"/><rect x="21" y="74" width="5" height="1.4" fill="#9cdcfe"/><rect x="26" y="74" width="1" height="1.4" fill="#cccccc"/><rect x="27" y="74" width="16" height="1.4" fill="#ce9178"/><rect x="43" y="74" width="1" height="1.4" fill="#808080"/><rect x="20" y="76" width="1" height="1.4" fill="#808080"/><rect x="21" y="76" width="3" height="1.4" fill="#569cd6"/><rect x="25" y="76" width="3" height="1.4" fill="#9cdcfe"/><rect x="28" y="76" width="1" height="1.4" fill="#cccccc"/><rect x="29" y="76" width="12" height="1.4" fill="#ce9178"/><rect x="42" y="76" width="3" height="1.4" fill="#9cdcfe"/><rect x="45" y="76" width="1" height="1.4" fill="#cccccc"/><rect x="46" y="76" width="7" height="1.4" fill="#ce9178"/><rect x="54" y="76" width="2" height="1.4" fill="#ce9178"/><rect x="56" y="76" width="1" height="1.4" fill="#808080"/><rect x="16" y="78" width="2" height="1.4" fill="#808080"/><rect x="18" y="78" width="3" height="1.4" fill="#569cd6"/><rect x="21" y="78" width="1" height="1.4" fill="#808080"/><rect x="16" y="80" width="1" height="1.4" fill="#808080"/><rect x="17" y="80" width="3" height="1.4" fill="#569cd6"/><rect x="21" y="80" width="5" height="1.4" fill="#9cdcfe"/><rect x="26" y="80" width="1" height="1.4" fill="#cccccc"/><rect x="27" y="80" width="16" height="1.4" fill="#ce9178"/><rect x="43" y="80" width="1" height="1.4" fill="#808080"/><rect x="20" y="82" width="1" height="1.4" fill="#808080"/><rect x="21" y="82" width="3" height="1.4" fill="#569cd6"/><rect x="25" y="82" width="3" height="1.4" fill="#9cdcfe"/><rect x="28" y="82" width="1" height="1.4" fill="#cccccc"/><rect x="29" y="82" width="8" height="1.4" fill="#ce9178"/><rect x="38" y="82" width="7" height="1.4" fill="#ce9178"/><rect x="46" y="82" width="10" height="1.4" fill="#ce9178"/><rect x="57" y="82" width="11" height="1.4" fill="#ce9178"/><rect x="69" y="82" width="3" height="1.4" fill="#9cdcfe"/><rect x="72" y="82" width="1" height="1.4" fill="#cccccc"/><rect x="73" y="82" width="7" height="1.4" fill="#ce9178"/><rect x="81" y="82" width="2" height="1.4" fill="#ce9178"/><rect x="83" y="82" width="1" height="1.4" fill="#808080"/><rect x="16" y="84" width="2" height="1.4" fill="#808080"/><rect x="18" y="84" width="3" height="1.4" fill="#569cd6"/><rect x="21" y="84" width="1" height="1.4" fill="#808080"/><rect x="12" y="86" width="2" height="1.4" fill="#808080"/><rect x="14" y="86" width="3" height="1.4" fill="#569cd6"/><rect x="17" y="86" width="1" height="1.4" fill="#808080"/><rect x="12" y="88" width="1" height="1.4" fill="#808080"/><rect x="13" y="88" width="3" height="1.4" fill="#569cd6"/><rect x="17" y="88" width="5" height="1.4" fill="#9cdcfe"/><rect x="22" y="88" width="1" height="1.4" fill="#cccccc"/><rect x="23" y="88" width="18" height="1.4" fill="#ce9178"/><rect x="41" y="88" width="1" height="1.4" fill="#808080"/><rect x="16" y="90" width="1" height="1.4" fill="#808080"/><rect x="17" y="90" width="6" height="1.4" fill="#569cd6"/><rect x="24" y="90" width="5" height="1.4" fill="#9cdcfe"/><rect x="29" y="90" width="1" height="1.4" fill="#cccccc"/><rect x="30" y="90" width="6" height="1.4" fill="#ce9178"/><rect x="37" y="90" width="7" height="1.4" fill="#9cdcfe"/><rect x="44" y="90" width="1" height="1.4" fill="#cccccc"/><rect x="45" y="90" width="15" height="1.4" fill="#ce9178"/><rect x="60" y="90" width="1" height="1.4" fill="#808080"/><rect x="61" y="90" width="8" height="1.4" fill="#569cd6"/><rect x="69" y="90" width="2" height="1.4" fill="#808080"/><rect x="71" y="90" width="6" height="1.4" fill="#569cd6"/><rect x="77" y="90" width="1" height="1.4" fill="#808080"/><rect x="79" y="90" width="4" height="1.4" fill="#6a9955"/><rect x="84" y="90" width="1" height="1.4" fill="#6a9955"/><rect x="86" y="90" width="3" height="1.4" fill="#6a9955"/><rect x="16" y="92" width="1" height="1.4" fill="#808080"/><rect x="17" y="92" width="6" height="1.4" fill="#569cd6"/><rect x="24" y="92" width="5" height="1.4" fill="#9cdcfe"/><rect x="29" y="92" width="1" height="1.4" fill="#cccccc"/><rect x="30" y="92" width="6" height="1.4" fill="#ce9178"/><rect x="37" y="92" width="7" height="1.4" fill="#9cdcfe"/><rect x="44" y="92" width="1" height="1.4" fill="#cccccc"/><rect x="45" y="92" width="14" height="1.4" fill="#ce9178"/><rect x="59" y="92" width="1" height="1.4" fill="#808080"/><rect x="60" y="92" width="8" height="1.4" fill="#569cd6"/><rect x="68" y="92" width="2" height="1.4" fill="#808080"/><rect x="70" y="92" width="6" height="1.4" fill="#569cd6"/><rect x="76" y="92" width="1" height="1.4" fill="#808080"/><rect x="78" y="92" width="4" height="1.4" fill="#6a9955"/><rect x="83" y="92" width="1" height="1.4" fill="#6a9955"/><rect x="85" y="92" width="3" height="1.4" fill="#6a9955"/><rect x="12" y="94" width="2" height="1.4" fill="#808080"/><rect x="14" y="94" width="3" height="1.4" fill="#569cd6"/><rect x="17" y="94" width="1" height="1.4" fill="#808080"/><rect x="8" y="96" width="2" height="1.4" fill="#808080"/><rect x="10" y="96" width="3" height="1.4" fill="#569cd6"/><rect x="13" y="96" width="1" height="1.4" fill="#808080"/><rect x="4" y="98" width="2" height="1.4" fill="#808080"/><rect x="6" y="98" width="7" height="1.4" fill="#569cd6"/><rect x="13" y="98" width="1" height="1.4" fill="#808080"/><rect x="4" y="102" width="4" height="1.4" fill="#6a9955"/><rect x="9" y="102" width="7" height="1.4" fill="#6a9955"/><rect x="17" y="102" width="3" height="1.4" fill="#6a9955"/><rect x="4" y="104" width="4" height="1.4" fill="#6a9955"/><rect x="9" y="104" width="7" height="1.4" fill="#6a9955"/><rect x="17" y="104" width="3" height="1.4" fill="#6a9955"/><rect x="4" y="106" width="1" height="1.4" fill="#808080"/><rect x="5" y="106" width="7" height="1.4" fill="#569cd6"/><rect x="13" y="106" width="2" height="1.4" fill="#9cdcfe"/><rect x="15" y="106" width="1" height="1.4" fill="#cccccc"/><rect x="16" y="106" width="9" height="1.4" fill="#ce9178"/><rect x="26" y="106" width="5" height="1.4" fill="#9cdcfe"/><rect x="31" y="106" width="1" height="1.4" fill="#cccccc"/><rect x="32" y="106" width="9" height="1.4" fill="#ce9178"/><rect x="41" y="106" width="1" height="1.4" fill="#808080"/><rect x="8" y="108" width="1" height="1.4" fill="#808080"/><rect x="9" y="108" width="2" height="1.4" fill="#569cd6"/><rect x="11" y="108" width="1" height="1.4" fill="#808080"/><rect x="12" y="108" width="7" height="1.4" fill="#cccccc"/><rect x="19" y="108" width="2" height="1.4" fill="#808080"/><rect x="21" y="108" width="2" height="1.4" fill="#569cd6"/><rect x="23" y="108" width="1" height="1.4" fill="#808080"/><rect x="8" y="110" width="1" height="1.4" fill="#808080"/><rect x="9" y="110" width="1" height="1.4" fill="#569cd6"/><rect x="10" y="110" width="1" height="1.4" fill="#808080"/><rect x="11" y="110" width="6" height="1.4" fill="#cccccc"/><rect x="18" y="110" width="1" height="1.4" fill="#808080"/><rect x="19" y="110" width="1" height="1.4" fill="#569cd6"/><rect x="21" y="110" width="4" height="1.4" fill="#9cdcfe"/><rect x="25" y="110" width="1" height="1.4" fill="#cccccc"/><rect x="26" y="110" width="37" height="1.4" fill="#ce9178"/><rect x="63" y="110" width="1" height="1.4" fill="#808080"/><rect x="64" y="110" width="28" height="1.4" fill="#cccccc"/><rect x="92" y="110" width="2" height="1.4" fill="#808080"/><rect x="94" y="110" width="1" height="1.4" fill="#569cd6"/><rect x="95" y="110" width="1" height="1.4" fill="#808080"/><rect x="97" y="110" width="1" height="1.4" fill="#cccccc"/><rect x="99" y="110" width="2" height="1.4" fill="#cccccc"/><rect x="101" y="110" width="2" height="1.4" fill="#808080"/><rect x="103" y="110" width="1" height="1.4" fill="#569cd6"/><rect x="104" y="110" width="1" height="1.4" fill="#808080"/><rect x="8" y="112" width="1" height="1.4" fill="#808080"/><rect x="9" y="112" width="1" height="1.4" fill="#569cd6"/><rect x="10" y="112" width="1" height="1.4" fill="#808080"/><rect x="11" y="112" width="9" height="1.4" fill="#cccccc"/><rect x="21" y="112" width="1" height="1.4" fill="#cccccc"/><rect x="23" y="112" width="2" height="1.4" fill="#cccccc"/><rect x="26" y="112" width="2" height="1.4" fill="#cccccc"/><rect x="29" y="112" width="2" height="1.4" fill="#cccccc"/><rect x="32" y="112" width="2" height="1.4" fill="#cccccc"/><rect x="35" y="112" width="2" height="1.4" fill="#cccccc"/><rect x="37" y="112" width="2" height="1.4" fill="#808080"/><rect x="39" y="112" width="1" height="1.4" fill="#569cd6"/><rect x="40" y="112" width="1" height="1.4" fill="#808080"/><rect x="8" y="114" width="1" height="1.4" fill="#808080"/><rect x="9" y="114" width="3" height="1.4" fill="#569cd6"/><rect x="13" y="114" width="5" height="1.4" fill="#9cdcfe"/><rect x="18" y="114" width="1" height="1.4" fill="#cccccc"/><rect x="19" y="114" width="14" height="1.4" fill="#ce9178"/><rect x="33" y="114" width="1" height="1.4" fill="#808080"/><rect x="12" y="116" width="1" height="1.4" fill="#808080"/><rect x="13" y="116" width="1" height="1.4" fill="#569cd6"/><rect x="15" y="116" width="4" height="1.4" fill="#9cdcfe"/><rect x="19" y="116" width="1" height="1.4" fill="#cccccc"/><rect x="20" y="116" width="32" height="1.4" fill="#ce9178"/><rect x="53" y="116" width="6" height="1.4" fill="#9cdcfe"/><rect x="59" y="116" width="1" height="1.4" fill="#cccccc"/><rect x="60" y="116" width="8" height="1.4" fill="#ce9178"/><rect x="68" y="116" width="1" height="1.4" fill="#808080"/><rect x="69" y="116" width="8" height="1.4" fill="#cccccc"/><rect x="77" y="116" width="2" height="1.4" fill="#808080"/><rect x="79" y="116" width="1" height="1.4" fill="#569cd6"/><rect x="80" y="116" width="1" height="1.4" fill="#808080"/><rect x="12" y="118" width="1" height="1.4" fill="#808080"/><rect x="13" y="118" width="1" height="1.4" fill="#569cd6"/><rect x="15" y="118" width="4" height="1.4" fill="#9cdcfe"/><rect x="19" y="118" width="1" height="1.4" fill="#cccccc"/><rect x="20" y="118" width="33" height="1.4" fill="#ce9178"/><rect x="54" y="118" width="6" height="1.4" fill="#9cdcfe"/><rect x="60" y="118" width="1" height="1.4" fill="#cccccc"/><rect x="61" y="118" width="8" height="1.4" fill="#ce9178"/><rect x="69" y="118" width="1" height="1.4" fill="#808080"/><rect x="70" y="118" width="6" height="1.4" fill="#cccccc"/><rect x="76" y="118" width="2" height="1.4" fill="#808080"/><rect x="78" y="118" width="1" height="1.4" fill="#569cd6"/><rect x="79" y="118" width="1" height="1.4" fill="#808080"/><rect x="8" y="120" width="2" height="1.4" fill="#808080"/><rect x="10" y="120" width="3" height="1.4" fill="#569cd6"/><rect x="13" y="120" width="1" height="1.4" fill="#808080"/><rect x="4" y="122" width="2" height="1.4" fill="#808080"/><rect x="6" y="122" width="7" height="1.4" fill="#569cd6"/><rect x="13" y="122" width="1" height="1.4" fill="#808080"/><rect x="4" y="128" width="1" height="1.4" fill="#808080"/><rect x="5" y="128" width="6" height="1.4" fill="#569cd6"/><rect x="12" y="128" width="3" height="1.4" fill="#9cdcfe"/><rect x="15" y="128" width="1" height="1.4" fill="#cccccc"/><rect x="16" y="128" width="59" height="1.4" fill="#ce9178"/><rect x="75" y="128" width="3" height="1.4" fill="#808080"/><rect x="78" y="128" width="6" height="1.4" fill="#569cd6"/><rect x="84" y="128" width="1" height="1.4" fill="#808080"/><rect x="4" y="130" width="1" height="1.4" fill="#808080"/><rect x="5" y="130" width="6" height="1.4" fill="#569cd6"/><rect x="12" y="130" width="3" height="1.4" fill="#9cdcfe"/><rect x="15" y="130" width="1" height="1.4" fill="#cccccc"/><rect x="16" y="130" width="7" height="1.4" fill="#ce9178"/><rect x="23" y="130" width="3" height="1.4" fill="#808080"/><rect x="26" y="130" width="6" height="1.4" fill="#569cd6"/><rect x="32" y="130" width="1" height="1.4" fill="#808080"/><rect x="0" y="132" width="2" height="1.4" fill="#808080"/><rect x="2" y="132" width="4" height="1.4" fill="#569cd6"/><rect x="6" y="132" width="1" height="1.4" fill="#808080"/><rect x="0" y="134" width="2" height="1.4" fill="#808080"/><rect x="2" y="134" width="4" height="1.4" fill="#569cd6"/><rect x="6" y="134" width="1" height="1.4" fill="#808080"/></svg><div style="left:1903px;top:115px;width:16px;height:878px;background:#1f1f1f;box-sizing:border-box;border-left:1px solid #2b2b2b;"></div><div style="left:1903px;top:115px;width:16px;height:309px;background:#3f3f3f;"></div><div style="left:1903px;top:347px;width:16px;height:2px;background:#8a8a8a;"></div><div style="left:0px;top:993px;width:1919px;height:25px;background:#181818;"></div><div style="left:0px;top:993px;width:1919px;height:1px;background:#2b2b2b;"></div><div style="left:0px;top:994px;width:43px;height:24px;background:#0078d4;"></div><div id="st_e0" class="ui" style="left:74.36px;top:999.30px;font-size:15px;line-height:15px;color:#cccccc;font-weight:normal;transform:scaleX(0.8222);transform-origin:0 0;">0</div><div id="st_w0" class="ui" style="left:107.60px;top:999.30px;font-size:15px;line-height:15px;color:#cccccc;font-weight:normal;transform:scaleX(0.9750);transform-origin:0 0;">0</div><div id="st_bb" class="ui" style="left:160.09px;top:999.30px;font-size:15px;line-height:15px;color:#cccccc;font-weight:normal;transform:scaleX(0.9095);transform-origin:0 0;">BLACKBOX Chat</div><div id="st_logs" class="ui" style="left:287.98px;top:999.30px;font-size:15px;line-height:15px;color:#cccccc;font-weight:normal;transform:scaleX(0.9609);transform-origin:0 0;">Add Logs</div><div id="st_cyber" class="ui" style="left:393.82px;top:999.30px;font-size:15px;line-height:15px;color:#cccccc;font-weight:normal;transform:scaleX(0.9667);transform-origin:0 0;">CyberCoder</div><div id="st_impr" class="ui" style="left:492.00px;top:999.30px;font-size:15px;line-height:15px;color:#cccccc;font-weight:normal;">Improve Code</div><div id="st_share" class="ui" style="left:606.00px;top:999.30px;font-size:15px;line-height:15px;color:#cccccc;font-weight:normal;transform:scaleX(0.9554);transform-origin:0 0;">Share Code Link</div><div id="st_ln" class="ui" style="left:1189.05px;top:999.30px;font-size:15px;line-height:15px;color:#cccccc;font-weight:normal;transform:scaleX(0.9506);transform-origin:0 0;">Ln 29, Col 14</div><div id="st_sp" class="ui" style="left:1295.00px;top:999.30px;font-size:15px;line-height:15px;color:#cccccc;font-weight:normal;transform:scaleX(0.9045);transform-origin:0 0;">Spaces: 4</div><div id="st_utf" class="ui" style="left:1375.07px;top:999.30px;font-size:15px;line-height:15px;color:#cccccc;font-weight:normal;transform:scaleX(0.9286);transform-origin:0 0;">UTF-8</div><div id="st_crlf" class="ui" style="left:1434.90px;top:999.30px;font-size:15px;line-height:15px;color:#cccccc;font-weight:normal;transform:scaleX(0.8308);transform-origin:0 0;">CRLF</div><div id="st_html" class="ui" style="left:1486.83px;top:999.30px;font-size:15px;line-height:15px;color:#cccccc;font-weight:normal;transform:scaleX(0.9700);transform-origin:0 0;">HTML</div><div id="st_live" class="ui" style="left:1606.00px;top:999.30px;font-size:15px;line-height:15px;color:#cccccc;font-weight:normal;transform:scaleX(0.9423);transform-origin:0 0;">Go Live</div><div id="st_bbai" class="ui" style="left:1699.07px;top:999.30px;font-size:15px;line-height:15px;color:#cccccc;font-weight:normal;transform:scaleX(0.9337);transform-origin:0 0;">BLACKBOXAI: Open Chat</div><svg style="left:12px;top:11px;" width="20" height="20" viewBox="0 0 20 20"><g transform="scale(0.2)"><path fill="#1a86d6" d="M96.46 10.8 L75.86 0.87 C73.47 -0.28 70.62 0.2 68.75 2.08 L29.29 38.07 L12.11 25.03 C10.51 23.81 8.27 23.91 6.78 25.26 L1.27 30.28 C-0.54 31.92 -0.54 34.77 1.27 36.42 L16.17 50 L1.27 63.58 C-0.54 65.23 -0.54 68.07 1.27 69.72 L6.78 74.73 C8.27 76.09 10.51 76.19 12.11 74.97 L29.29 61.93 L68.75 97.92 C70.62 99.8 73.47 100.28 75.86 99.13 L96.46 89.2 C98.62 88.16 100 85.97 100 83.57 V16.43 C100 14.03 98.62 11.84 96.46 10.8 Z M75.03 72.7 L45.1 50 L75.03 27.3 V72.7 Z"/><path fill="#24a9f2" d="M73 0.6 L96.46 10.8 C98.62 11.84 100 14.03 100 16.43 V83.57 C100 85.97 98.62 88.16 96.46 89.2 L73 99.4 Z"/></g></svg><svg style="left:530px;top:8px;" width="60" height="28" viewBox="0 0 60 28"><path d="M13.1 7 L5.6 13.4 L13.1 19.8 M5.8 13.4 H21.6" fill="none" stroke="#cccccc" stroke-width="1.3"/><path d="M46.6 7 L53.4 13.4 L46.6 19.8 M38.3 13.4 H53.2" fill="none" stroke="#8b8b8b" stroke-width="1.3"/></svg><svg style="left:928px;top:9px;" width="24" height="24" viewBox="0 0 24 24"><circle cx="13.4" cy="9.2" r="5.3" fill="none" stroke="#cccccc" stroke-width="1.3"/><path d="M3.4 20.4 L9.5 13.6" stroke="#cccccc" stroke-width="1.4"/></svg><svg style="left:1350px;top:11.5px;" width="21" height="19" viewBox="0 0 21 19"><g fill="#e0e0e0"><ellipse cx="6" cy="5" rx="5.2" ry="5"/><ellipse cx="15" cy="5" rx="5.2" ry="5"/><path d="M1.8 8.6 C0.4 9.6 0 11.4 0 13.2 C0 16.6 4 18.8 10.5 18.8 C17 18.8 21 16.6 21 13.2 C21 11.4 20.6 9.6 19.2 8.6 Z"/></g><g fill="#181818"><ellipse cx="6.2" cy="5.4" rx="2.9" ry="3"/><ellipse cx="14.8" cy="5.4" rx="2.9" ry="3"/><rect x="4.1" y="9.9" width="12.8" height="6.3" rx="2.2"/></g><g fill="#e0e0e0"><rect x="7" y="10.9" width="2.3" height="3.9"/><rect x="11.7" y="10.9" width="2.3" height="3.9"/></g></svg><svg style="left:1374px;top:17px;" width="12" height="8" viewBox="0 0 12 8"><path d="M1 1.5 L6 6.5 L11 1.5" fill="none" stroke="#cccccc" stroke-width="1.3"/></svg><svg style="left:1620px;top:10px;" width="24" height="24" viewBox="0 0 24 24"><rect x="4.5" y="3.8" width="6.8" height="14.6" rx="1.6" fill="none" stroke="#cccccc" stroke-width="1.5"/><rect x="14.7" y="3.8" width="5.2" height="5.5" rx="1.5" fill="none" stroke="#cccccc" stroke-width="1.5"/><rect x="14.7" y="12.9" width="5.2" height="5.5" rx="1.5" fill="none" stroke="#cccccc" stroke-width="1.5"/></svg><svg style="left:1652px;top:10px;" width="24" height="24" viewBox="0 0 24 24"><rect x="3.8" y="2.9" width="16.3" height="16.8" rx="1.8" fill="none" stroke="#cccccc" stroke-width="1.5"/><rect x="3.5" y="2.6" width="7.2" height="17.4" rx="1.2" fill="#cccccc"/></svg><svg style="left:1684px;top:10px;" width="24" height="24" viewBox="0 0 24 24"><rect x="4.3" y="2.9" width="16.3" height="16.8" rx="1.8" fill="none" stroke="#cccccc" stroke-width="1.5"/><path d="M4.3 14.3 H20.6" stroke="#cccccc" stroke-width="1.5"/></svg><svg style="left:1717px;top:10px;" width="24" height="24" viewBox="0 0 24 24"><rect x="3.8" y="2.9" width="16.3" height="16.8" rx="1.8" fill="none" stroke="#cccccc" stroke-width="1.5"/><path d="M13.2 2.9 V19.7" stroke="#cccccc" stroke-width="1.5"/></svg><svg style="left:1765px;top:10px;" width="140" height="24" viewBox="0 0 140 24"><path d="M5.9 10.5 H19.2" stroke="#cccccc" stroke-width="1"/><rect x="62.7" y="7.8" width="10" height="10" rx="1.5" fill="none" stroke="#cccccc" stroke-width="1"/><path d="M64.6 5.9 H73 C74.4 5.9 75.1 6.6 75.1 8 V16" fill="none" stroke="#cccccc" stroke-width="1"/><path d="M120.3 5 L133 17.9 M133 5 L120.3 17.9" stroke="#cccccc" stroke-width="1"/></svg><svg style="left:12px;top:54px;" width="36" height="40" viewBox="0 0 36 40"><g fill="none" stroke="#d7d7d7" stroke-width="2.2" stroke-linejoin="round"><path d="M12.7 13.3 H5.2 V33.7 H21.9 V26.6"/><path d="M12.7 6 H24.9 L30 11 V26.6 H12.7 Z"/><path d="M24 6 V11.7 H30"/></g></svg><svg style="left:12px;top:112px;" width="36" height="40" viewBox="0 0 36 40"><g fill="none" stroke="#868686" stroke-width="2"><circle cx="22.2" cy="17.3" r="9.3"/><path d="M4.6 35.3 L15.2 24.3"/></g></svg><svg style="left:12px;top:172px;" width="36" height="40" viewBox="0 0 36 40"><g fill="none" stroke="#868686" stroke-width="1.9"><circle cx="11.4" cy="11.4" r="3.6"/><circle cx="24.6" cy="16.9" r="3.6"/><circle cx="11.4" cy="32.2" r="3.6"/><path d="M11.4 15 V28.6"/><path d="M24.6 20.5 C24.6 23.5 23 24.6 20 24.6 H15 C13 24.6 11.4 25.5 11.4 28"/></g></svg><svg style="left:12px;top:232px;" width="36" height="40" viewBox="0 0 36 40"><g fill="none" stroke="#868686" stroke-width="1.9" stroke-linejoin="round"><path d="M13.6 20.3 V7.8 L31.6 19.7 L20 27.4"/><ellipse cx="10.6" cy="30.3" rx="4.4" ry="5.8"/><path d="M6.4 27.8 H14.8 M3.3 30.6 H6.2 M15 30.6 H17.9 M3.9 24.8 L6.8 26.6 M17.3 24.8 L14.4 26.6 M3.9 36.1 L6.8 33.8 M17.3 36.1 L14.4 33.8"/></g></svg><svg style="left:12px;top:292px;" width="36" height="40" viewBox="0 0 36 40"><g fill="none" stroke="#868686" stroke-width="2" stroke-linejoin="round"><path d="M4.1 35.6 V14.8 Q4.1 13.6 5.3 13.6 H14 Q15.1 13.6 15.1 14.8 V35.6 M4.1 25 H25.3 Q26.5 25 26.5 26.2 V34.4 Q26.5 35.6 25.3 35.6 H5.3 Q4.1 35.6 4.1 34.4"/><rect x="21" y="8.1" width="11" height="10.8" rx="1.3"/></g></svg><svg style="left:12px;top:352px;" width="36" height="40" viewBox="0 0 36 40"><g fill="none" stroke="#868686" stroke-width="2" stroke-linejoin="miter"><path d="M28.3 17.9 V10 H5.9 V24.8 H9.4 L10.4 29.8 L11.8 27"/><path d="M15.7 21.2 H30.3 V30.3 H27.1 L25.9 33.4 L23.2 30.3 H15.7 Z"/></g></svg><svg style="left:10px;top:882px;" width="40" height="40" viewBox="0 0 40 40"><g fill="none" stroke="#868686" stroke-width="1.6"><circle cx="20.1" cy="20.6" r="14.3"/><circle cx="20.1" cy="17.7" r="6.4"/><path d="M11.3 30.6 C13 26.5 16.5 24.8 20.1 24.8 C23.7 24.8 27.2 26.5 28.9 30.6"/></g></svg><svg style="left:10px;top:943px;" width="40" height="40" viewBox="0 0 40 40"><g fill="none" stroke="#868686" stroke-width="2.1" stroke-linejoin="miter"><path d="M16.69 11.88 L17.79 6.29 L22.41 6.29 L23.51 11.88 L28.23 8.70 L31.50 11.97 L28.32 16.69 L33.91 17.79 L33.91 22.41 L28.32 23.51 L31.50 28.23 L28.23 31.50 L23.51 28.32 L22.41 33.91 L17.79 33.91 L16.69 28.32 L11.97 31.50 L8.70 28.23 L11.88 23.51 L6.29 22.41 L6.29 17.79 L11.88 16.69 L8.70 11.97 L11.97 8.70 Z"/><circle cx="20.1" cy="20.1" r="3.4"/></g></svg><svg style="left:336px;top:56px;" width="30" height="20" viewBox="0 0 30 20"><g fill="#cccccc"><circle cx="8.2" cy="10" r="1.25"/><circle cx="15" cy="10" r="1.25"/><circle cx="21.8" cy="10" r="1.25"/></g></svg><svg style="left:64px;top:95px;" width="16" height="12" viewBox="0 0 16 12"><path d="M2 2.8 L8.2 9 L14.4 2.8" fill="none" stroke="#cccccc" stroke-width="1.3"/></svg><svg style="left:64px;top:205px;" width="16" height="12" viewBox="0 0 16 12"><path d="M2 2.8 L8.2 9 L14.4 2.8" fill="none" stroke="#cccccc" stroke-width="1.3"/></svg><svg style="left:64px;top:944px;" width="14" height="16" viewBox="0 0 14 16"><path d="M5 2 L11.3 8 L5 14" fill="none" stroke="#cccccc" stroke-width="1.3"/></svg><svg style="left:64px;top:972px;" width="14" height="16" viewBox="0 0 14 16"><path d="M5 2 L11.3 8 L5 14" fill="none" stroke="#cccccc" stroke-width="1.3"/></svg><svg style="left:90px;top:120px;" width="20" height="20" viewBox="0 0 20 20"><path d="M4.6 4.2 L15.6 14.2 M15.6 4.2 L4.6 14.2" stroke="#cccccc" stroke-width="1.3"/></svg><svg style="left:117.7px;top:122.2px;" width="14" height="12" viewBox="0 0 14 12"><path d="M5 0.9 L1.3 5.3 L5 9.7 M8.6 0.9 L12.3 5.3 L8.6 9.7" fill="none" stroke="#ea6c35" stroke-width="1.75"/></svg><svg style="left:118.6px;top:150px;" width="12" height="12" viewBox="0 0 12 12"><path d="M3.9 0.3 L3.1 11.7 M8.8 0.3 L8 11.7 M0.3 3.4 H11.7 M0.3 8.1 H11.7" fill="none" stroke="#519aba" stroke-width="2"/></svg><div class="ui" style="left:117.6px;top:176px;font-size:13.2px;line-height:13.2px;font-weight:bold;color:#cbcb41;letter-spacing:-1px;transform:scaleX(0.93);transform-origin:0 0">JS</div><svg style="left:246px;top:198px;" width="120" height="28" viewBox="0 0 120 28"><g fill="none" stroke="#cccccc" stroke-width="1.2"><path d="M13 20.6 H8.4 V5.9 H16.4 L21.3 11 V14.5"/><path d="M16 5.9 V11.6 H21.3"/><path d="M20.9 15 V24 M16.3 19.6 H25.5"/><path d="M42 20.4 H37.5 V5.9 H43.6 L45.2 8.3 H53.2 V13"/><path d="M37.5 11.2 H43.6 L45.2 8.3"/><path d="M50.9 15 V24 M46.3 19.6 H55.5"/><path d="M70.3 8.5 A7.2 7.2 0 1 0 80.2 8.6"/><path d="M67.5 6.3 H71.7 V10.8"/><rect x="101.8" y="6.3" width="10.8" height="10.9" rx="1.7"/><rect x="98" y="10.6" width="10.5" height="10.6" rx="1.7" fill="#181818"/><path d="M100.3 15.9 H106.2"/></g></svg><svg style="left:78px;top:230.8px;" width="18" height="16" viewBox="0 0 18 16"><g fill="#a074c4"><path d="M1.1 1 H10.3 V2.1 H2.2 V8.8 H1.1 Z"/><path d="M3.9 3.1 H16.4 V13.3 H3.9 Z M5 4.2 V12.2 H15.3 V4.2 Z"/><path d="M5 12.2 L8.3 7.4 L10.6 10.2 L12.2 8.8 L15.3 12.2 Z"/><circle cx="12.6" cy="7.6" r="1.4"/></g><rect x="5" y="4.2" width="10.3" height="1.3" fill="#3a2a4a"/></svg><svg style="left:78px;top:258.3px;" width="18" height="16" viewBox="0 0 18 16"><g fill="#a074c4"><path d="M1.1 1 H10.3 V2.1 H2.2 V8.8 H1.1 Z"/><path d="M3.9 3.1 H16.4 V13.3 H3.9 Z M5 4.2 V12.2 H15.3 V4.2 Z"/><path d="M5 12.2 L8.3 7.4 L10.6 10.2 L12.2 8.8 L15.3 12.2 Z"/><circle cx="12.6" cy="7.6" r="1.4"/></g><rect x="5" y="4.2" width="10.3" height="1.3" fill="#3a2a4a"/></svg><svg style="left:78px;top:285.8px;" width="18" height="16" viewBox="0 0 18 16"><g fill="#a074c4"><path d="M1.1 1 H10.3 V2.1 H2.2 V8.8 H1.1 Z"/><path d="M3.9 3.1 H16.4 V13.3 H3.9 Z M5 4.2 V12.2 H15.3 V4.2 Z"/><path d="M5 12.2 L8.3 7.4 L10.6 10.2 L12.2 8.8 L15.3 12.2 Z"/><circle cx="12.6" cy="7.6" r="1.4"/></g><rect x="5" y="4.2" width="10.3" height="1.3" fill="#3a2a4a"/></svg><svg style="left:78px;top:313.3px;" width="18" height="16" viewBox="0 0 18 16"><g fill="#a074c4"><path d="M1.1 1 H10.3 V2.1 H2.2 V8.8 H1.1 Z"/><path d="M3.9 3.1 H16.4 V13.3 H3.9 Z M5 4.2 V12.2 H15.3 V4.2 Z"/><path d="M5 12.2 L8.3 7.4 L10.6 10.2 L12.2 8.8 L15.3 12.2 Z"/><circle cx="12.6" cy="7.6" r="1.4"/></g><rect x="5" y="4.2" width="10.3" height="1.3" fill="#3a2a4a"/></svg><svg style="left:78px;top:340.8px;" width="18" height="16" viewBox="0 0 18 16"><g fill="#a074c4"><path d="M1.1 1 H10.3 V2.1 H2.2 V8.8 H1.1 Z"/><path d="M3.9 3.1 H16.4 V13.3 H3.9 Z M5 4.2 V12.2 H15.3 V4.2 Z"/><path d="M5 12.2 L8.3 7.4 L10.6 10.2 L12.2 8.8 L15.3 12.2 Z"/><circle cx="12.6" cy="7.6" r="1.4"/></g><rect x="5" y="4.2" width="10.3" height="1.3" fill="#3a2a4a"/></svg><div class="ui" style="left:80.5px;top:369.9px;font-size:13.2px;line-height:13.2px;font-weight:bold;color:#cbcb41;letter-spacing:-1px;transform:scaleX(0.93);transform-origin:0 0">JS</div><svg style="left:78px;top:395.8px;" width="18" height="16" viewBox="0 0 18 16"><g fill="#a074c4"><path d="M1.1 1 H10.3 V2.1 H2.2 V8.8 H1.1 Z"/><path d="M3.9 3.1 H16.4 V13.3 H3.9 Z M5 4.2 V12.2 H15.3 V4.2 Z"/><path d="M5 12.2 L8.3 7.4 L10.6 10.2 L12.2 8.8 L15.3 12.2 Z"/><circle cx="12.6" cy="7.6" r="1.4"/></g><rect x="5" y="4.2" width="10.3" height="1.3" fill="#3a2a4a"/></svg><svg style="left:80.7px;top:425.2px;" width="14" height="12" viewBox="0 0 14 12"><path d="M5 0.9 L1.3 5.3 L5 9.7 M8.6 0.9 L12.3 5.3 L8.6 9.7" fill="none" stroke="#ea6c35" stroke-width="1.75"/></svg><svg style="left:78px;top:450.8px;" width="18" height="16" viewBox="0 0 18 16"><g fill="#a074c4"><path d="M1.1 1 H10.3 V2.1 H2.2 V8.8 H1.1 Z"/><path d="M3.9 3.1 H16.4 V13.3 H3.9 Z M5 4.2 V12.2 H15.3 V4.2 Z"/><path d="M5 12.2 L8.3 7.4 L10.6 10.2 L12.2 8.8 L15.3 12.2 Z"/><circle cx="12.6" cy="7.6" r="1.4"/></g><rect x="5" y="4.2" width="10.3" height="1.3" fill="#3a2a4a"/></svg><svg style="left:81px;top:480.5px;" width="12" height="12" viewBox="0 0 12 12"><path d="M3.9 0.3 L3.1 11.7 M8.8 0.3 L8 11.7 M0.3 3.4 H11.7 M0.3 8.1 H11.7" fill="none" stroke="#519aba" stroke-width="2"/></svg><svg style="left:397.7px;top:60px;" width="14" height="12" viewBox="0 0 14 12"><path d="M5 0.9 L1.3 5.3 L5 9.7 M8.6 0.9 L12.3 5.3 L8.6 9.7" fill="none" stroke="#ea6c35" stroke-width="1.75"/></svg><svg style="left:524px;top:56px;" width="20" height="20" viewBox="0 0 20 20"><path d="M5 4.6 L16.4 15.5 M16.4 4.6 L5 15.5" stroke="#ffffff" stroke-width="1.35"/></svg><svg style="left:572px;top:59.5px;" width="12" height="12" viewBox="0 0 12 12"><path d="M3.9 0.3 L3.1 11.7 M8.8 0.3 L8 11.7 M0.3 3.4 H11.7 M0.3 8.1 H11.7" fill="none" stroke="#519aba" stroke-width="2"/></svg><div class="ui" style="left:721px;top:58.2px;font-size:13.2px;line-height:13.2px;font-weight:bold;color:#cbcb41;letter-spacing:-1px;transform:scaleX(0.93);transform-origin:0 0">JS</div><svg style="left:1848px;top:54px;" width="24" height="24" viewBox="0 0 24 24"><rect x="4.3" y="4.1" width="15.6" height="15.6" rx="1.2" fill="none" stroke="#cccccc" stroke-width="1.8"/><path d="M11.3 4.1 V19.7" stroke="#cccccc" stroke-width="1.8"/></svg><svg style="left:1878px;top:56px;" width="26" height="20" viewBox="0 0 26 20"><g fill="#cccccc"><circle cx="7.1" cy="9.9" r="1.2"/><circle cx="13.3" cy="9.9" r="1.2"/><circle cx="19.8" cy="9.9" r="1.2"/></g></svg><svg style="left:405.2px;top:95.2px;" width="14" height="12" viewBox="0 0 14 12"><path d="M5 0.9 L1.3 5.3 L5 9.7 M8.6 0.9 L12.3 5.3 L8.6 9.7" fill="none" stroke="#ea6c35" stroke-width="1.75"/></svg><svg style="left:530px;top:94px;" width="10" height="14" viewBox="0 0 10 14"><path d="M2 2 L7.2 7 L2 12" fill="none" stroke="#a9a9a9" stroke-width="1.2"/></svg><svg style="left:606.5px;top:94px;" width="10" height="14" viewBox="0 0 10 14"><path d="M2 2 L7.2 7 L2 12" fill="none" stroke="#a9a9a9" stroke-width="1.2"/></svg><svg style="left:687px;top:94px;" width="10" height="14" viewBox="0 0 10 14"><path d="M2 2 L7.2 7 L2 12" fill="none" stroke="#a9a9a9" stroke-width="1.2"/></svg><svg style="left:545px;top:93px;" width="20" height="17" viewBox="0 0 20 17"><g fill="none" stroke="#75beff" stroke-width="1.5" stroke-linejoin="round"><path d="M1.2 6.2 L10.4 1.5 L18.5 5.2 V10.9 L9.2 15.6 L1.2 11.8 Z"/><path d="M1.2 6.2 L9.2 10 L18.5 5.2 M9.2 10 V15.6"/></g></svg><svg style="left:621.3px;top:93px;" width="20" height="17" viewBox="0 0 20 17"><g fill="none" stroke="#75beff" stroke-width="1.5" stroke-linejoin="round"><path d="M1.2 6.2 L10.4 1.5 L18.5 5.2 V10.9 L9.2 15.6 L1.2 11.8 Z"/><path d="M1.2 6.2 L9.2 10 L18.5 5.2 M9.2 10 V15.6"/></g></svg><svg style="left:701.3px;top:93px;" width="20" height="17" viewBox="0 0 20 17"><g fill="none" stroke="#75beff" stroke-width="1.5" stroke-linejoin="round"><path d="M1.2 6.2 L10.4 1.5 L18.5 5.2 V10.9 L9.2 15.6 L1.2 11.8 Z"/><path d="M1.2 6.2 L9.2 10 L18.5 5.2 M9.2 10 V15.6"/></g></svg><svg style="left:10px;top:996px;" width="24" height="20" viewBox="0 0 24 20"><path d="M5.8 7.2 L11.7 11.75 L5.8 16.75 M17.1 2.2 L12.1 6.75 L17.1 12.2" fill="none" stroke="#ffffff" stroke-width="1.3"/></svg><svg style="left:52px;top:996px;" width="20" height="20" viewBox="0 0 20 20"><g fill="none" stroke="#cccccc" stroke-width="1.2"><circle cx="9.25" cy="10.1" r="7.3"/><path d="M6 6.8 L12.5 13.4 M12.5 6.8 L6 13.4"/></g></svg><svg style="left:85px;top:996px;" width="20" height="20" viewBox="0 0 20 20"><g fill="none" stroke="#cccccc" stroke-width="1.2" stroke-linejoin="round"><path d="M10.1 2.6 L17.6 16.2 H2.6 Z"/><path d="M10.1 7.6 V12.3 M10.1 13.6 V15"/></g></svg><svg style="left:140.5px;top:998.8px;" width="12" height="16" viewBox="0 0 12 16"><path d="M6.2 0.3 L1.2 9 H5 L3.7 15.6 L10.3 6 H6.4 Z" fill="#f5862c"/></svg><svg style="left:1679.6px;top:998.8px;" width="12" height="16" viewBox="0 0 12 16"><path d="M6.2 0.3 L1.2 9 H5 L3.7 15.6 L10.3 6 H6.4 Z" fill="#f5862c"/></svg><svg style="left:371px;top:998px;" width="20" height="18" viewBox="0 0 20 18"><path fill="#fcc21b" d="M1.6 10.2 C1.6 6.8 4 5 6.2 3.8 C7.4 3.1 8.4 1.6 9.3 1.2 C10.5 0.8 11 2.2 10.4 3.4 L10 4.3 H16.2 C17.4 4.3 17.8 5.2 17.6 5.9 C17.4 6.6 16.8 6.9 16 6.9 H11.5 C12.2 7.3 12.3 8.2 11.8 8.8 C12.2 9.3 12.2 10.1 11.6 10.6 C11.9 11.2 11.8 12 11.1 12.4 C11.3 13.3 10.8 14.2 9.5 14.2 H6.5 C3.5 14.2 1.6 12.6 1.6 10.2 Z"/><path d="M10.2 8.9 H11.6 M10 10.6 H11.4 M9.6 12.4 H11" stroke="#e8a200" stroke-width="0.8"/></svg><svg style="left:1546.5px;top:997.5px;" width="19" height="16.5" viewBox="0 0 21 19"><g fill="#cccccc"><ellipse cx="6" cy="5" rx="5.2" ry="5"/><ellipse cx="15" cy="5" rx="5.2" ry="5"/><path d="M1.8 8.6 C0.4 9.6 0 11.4 0 13.2 C0 16.6 4 18.8 10.5 18.8 C17 18.8 21 16.6 21 13.2 C21 11.4 20.6 9.6 19.2 8.6 Z"/></g><g fill="#181818"><ellipse cx="6.2" cy="5.4" rx="2.9" ry="3"/><ellipse cx="14.8" cy="5.4" rx="2.9" ry="3"/><rect x="4.1" y="9.9" width="12.8" height="6.3" rx="2.2"/></g><g fill="#cccccc"><rect x="7" y="10.9" width="2.3" height="3.9"/><rect x="11.7" y="10.9" width="2.3" height="3.9"/></g></svg><svg style="left:1585px;top:997px;" width="18" height="20" viewBox="0 0 18 20"><g fill="none" stroke="#cccccc" stroke-width="1.2"><path d="M4.47 13.09 A6.9 6.9 0 1 1 13.33 13.09"/><path d="M6.4 10.79 A3.9 3.9 0 1 1 11.4 10.79"/></g><circle cx="8.9" cy="7.8" r="1.7" fill="#cccccc"/><path d="M8.9 8.6 V17" stroke="#cccccc" stroke-width="2.1"/></svg><svg style="left:1883px;top:996px;" width="20" height="20" viewBox="0 0 20 20"><g fill="none" stroke="#cccccc" stroke-width="1.2" stroke-linejoin="round"><path d="M3.3 14.6 H16.6 L15 12.3 V8.3 C15 5.2 12.9 3.2 10 3.2 C7.1 3.2 5 5.2 5 8.3 V12.3 Z"/><path d="M8.2 16.4 C8.6 17.6 11.4 17.6 11.8 16.4"/></g></svg></body></html>
